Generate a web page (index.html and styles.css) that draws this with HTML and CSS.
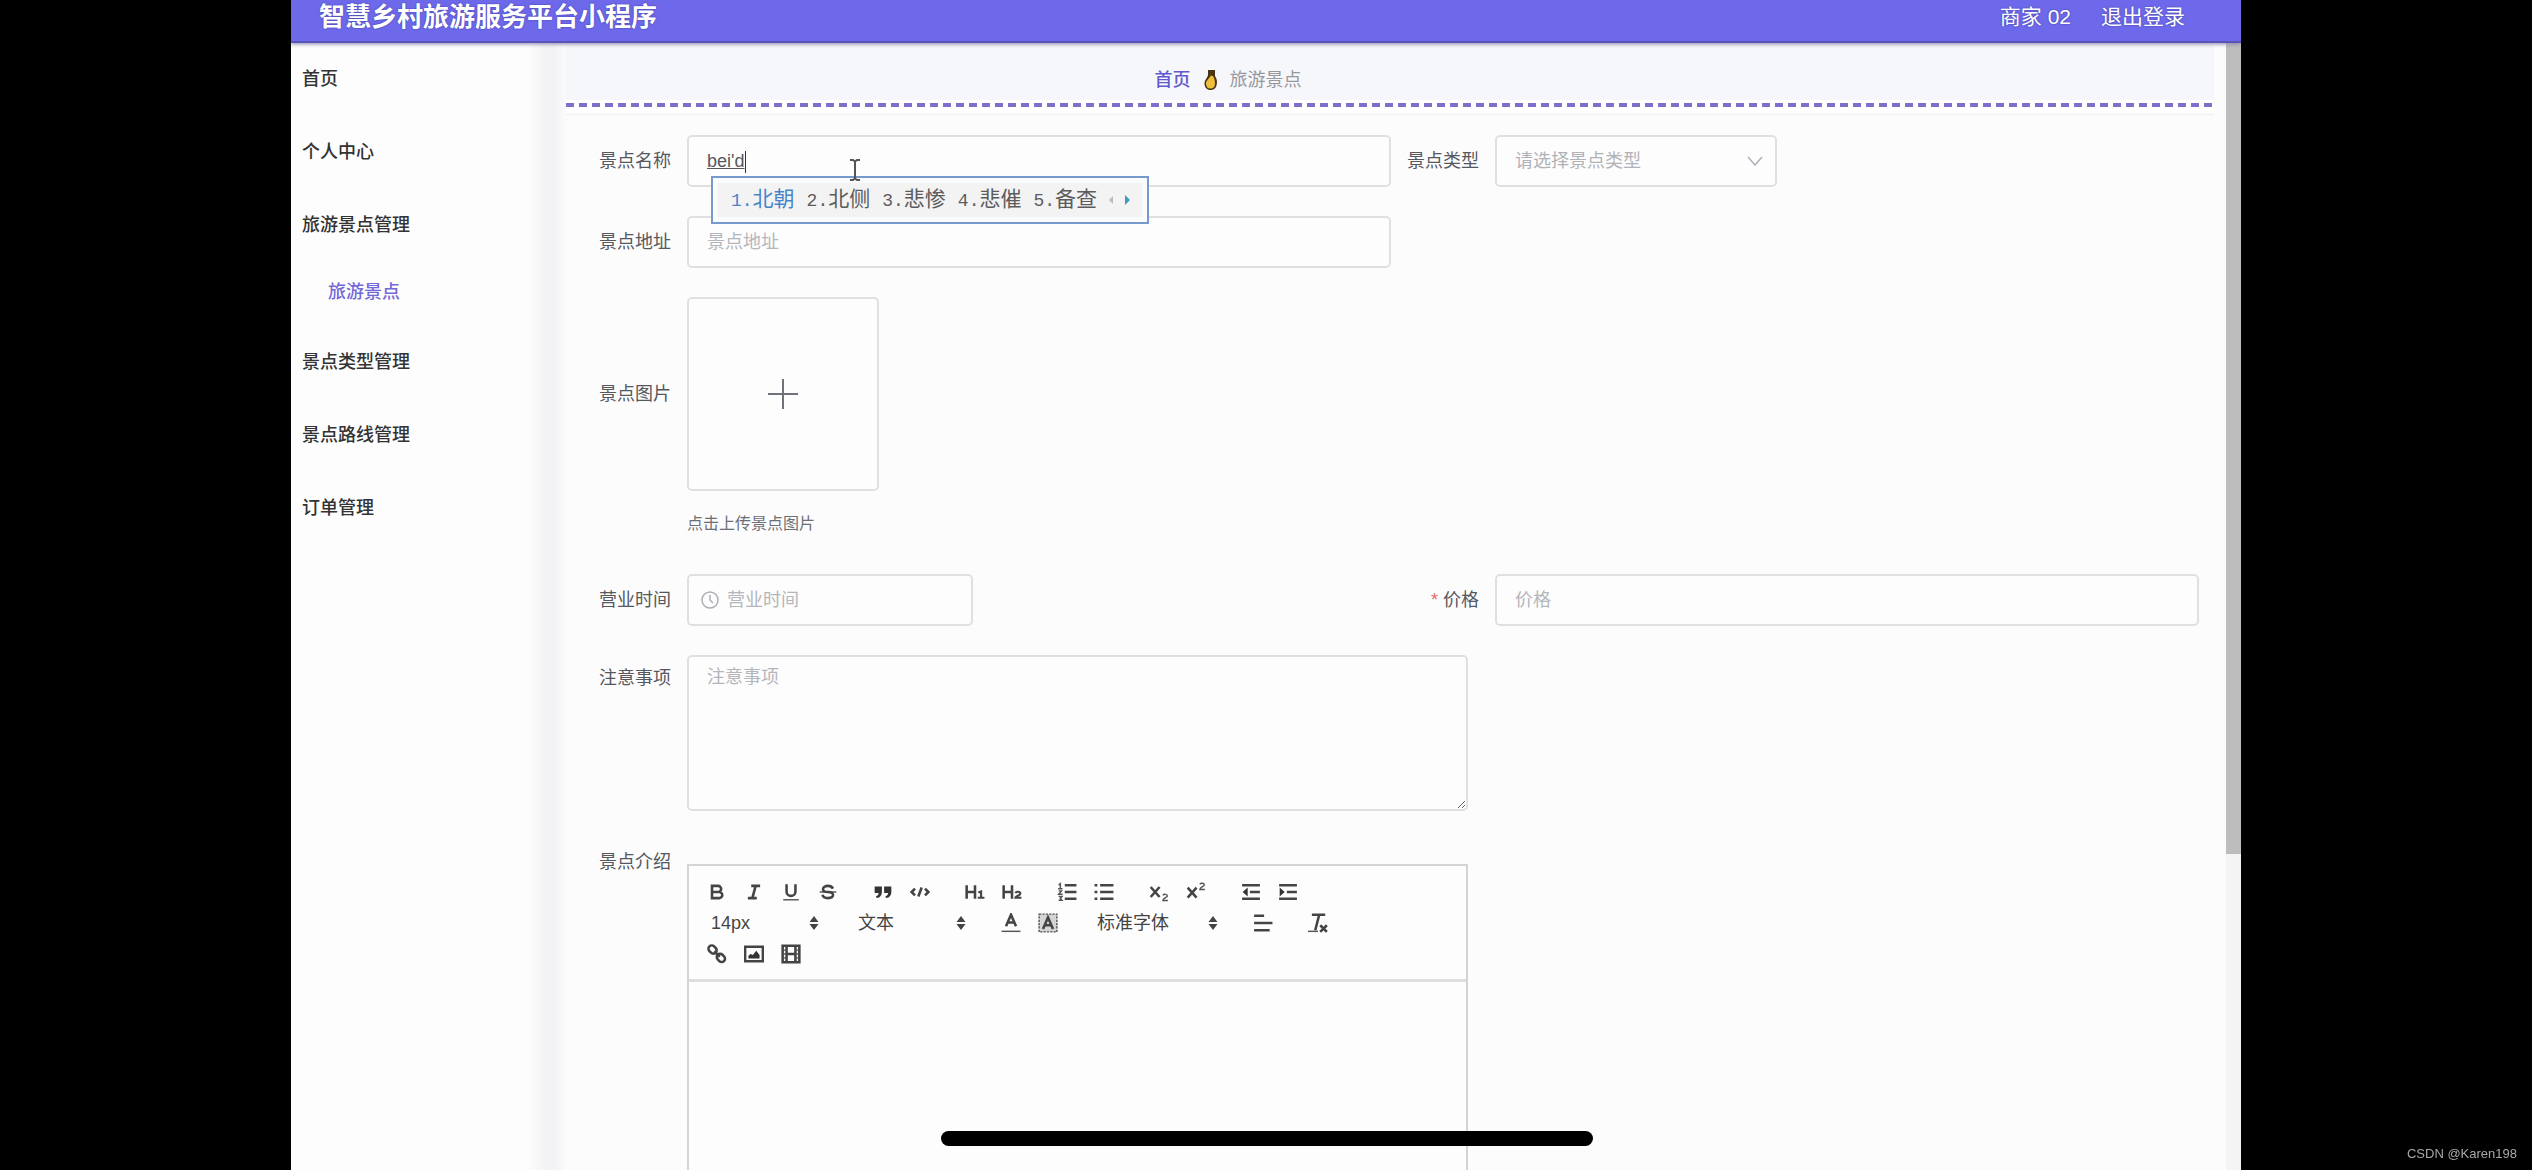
FILE: index.html
```html
<!DOCTYPE html>
<html lang="zh-CN">
<head>
<meta charset="utf-8">
<title>智慧乡村旅游服务平台小程序</title>
<link rel="stylesheet" href="styles.css">
</head>
<body>
<div class="app">
  <header class="topbar">
    <h1 class="brand">智慧乡村旅游服务平台小程序</h1>
    <nav class="account">
      <span>商家 02</span>
      <a href="#">退出登录</a>
    </nav>
  </header>

  <div class="layout">
    <aside class="sidebar">
      <ul class="menu">
        <li><a href="#">首页</a></li>
        <li><a href="#">个人中心</a></li>
        <li><a href="#">旅游景点管理</a>
          <ul class="submenu"><li><a href="#">旅游景点</a></li></ul>
        </li>
        <li><a href="#">景点类型管理</a></li>
        <li><a href="#">景点路线管理</a></li>
        <li><a href="#">订单管理</a></li>
      </ul>
    </aside>

    <main class="content">
      <nav class="crumbs">
        <a href="#">首页</a>
        <svg class="crumb-icon" viewBox="0 0 15 22"><path d="M5 1h7v6c2 3 2.500 6 1.500 9.500C12.500 20 10 21 7.500 21 4 21 1.500 18.500 1.500 14.500 1.500 11 4.500 9 5 6z" fill="#4a3616"/><path d="M8 6.500c3 0 4 4.500 4 8 0 3-1.500 5-4.500 5S3 17.500 3 14.500 5.500 10.500 8 6.500z" fill="#f0bd3c"/></svg>
        <span>旅游景点</span>
      </nav>
      <div class="divider"></div>

      <form class="form">
        <div class="pair">
          <div class="row">
            <label class="label" for="name">景点名称</label>
            <div class="field name-field">
              <input class="input typed" id="name" type="text" value="bei'd">
              <span class="caret"></span>
              <div class="ime">
                <ol class="candidates">
                  <li class="picked"><b>1.</b>北朝</li>
                  <li><b>2.</b>北侧</li>
                  <li><b>3.</b>悲惨</li>
                  <li><b>4.</b>悲催</li>
                  <li><b>5.</b>备查</li>
                </ol>
                <svg class="ime-arrows" viewBox="0 0 26 12"><path d="M6 2v8L2 6z" fill="#b9bcc0"/><path d="M18 1v10l5-5z" fill="#3f9cc8"/></svg>
              </div>
              <svg class="ibeam" viewBox="0 0 12 24"><path d="M1 2h3l2 1.500L8 2h3M6 3v18M1 22h3l2-1.500L8 22h3" fill="none" stroke="#555" stroke-width="2"/></svg>
            </div>
          </div>
          <div class="row">
            <label class="label" for="type">景点类型</label>
            <div class="select-box">
              <select class="input" id="type"><option>请选择景点类型</option></select>
              <svg class="chevron" viewBox="0 0 16 10"><path d="M1 1l7 8 7-8" fill="none" stroke="#aeb2b9" stroke-width="1.500"/></svg>
            </div>
          </div>
        </div>

        <div class="pair">
          <div class="row">
            <label class="label" for="addr">景点地址</label>
            <input class="input field" id="addr" type="text" placeholder="景点地址">
          </div>
        </div>

        <div class="row upload-row">
          <label class="label" for="upload">景点图片</label>
          <button class="upload" id="upload" type="button" aria-label="点击上传景点图片">
            <svg class="plus" viewBox="0 0 30 30"><path d="M15 0v30M0 15h30" stroke="#6f7278" stroke-width="2"/></svg>
          </button>
        </div>
        <p class="hint">点击上传景点图片</p>

        <div class="pair">
          <div class="row">
            <label class="label" for="time">营业时间</label>
            <div class="time-box">
              <svg class="clock" viewBox="0 0 18 18"><circle cx="9" cy="9" r="8"/><path d="M9 4v5l3 3"/></svg>
              <input class="input" id="time" type="text" placeholder="营业时间">
            </div>
          </div>
          <div class="row">
            <label class="label" for="price"><i>*</i>价格</label>
            <input class="input field" id="price" type="text" placeholder="价格">
          </div>
        </div>

        <div class="row top">
          <label class="label" for="notes">注意事项</label>
          <textarea class="input notes" id="notes" placeholder="注意事项"></textarea>
        </div>

        <div class="row top intro">
          <label class="label" for="editor">景点介绍</label>
          <div class="editor">
            <div class="toolbar">
              <div class="tools">
                <div class="group">
                  <button type="button" aria-label="加粗"><svg viewBox="0 0 18 18"><path class="s" d="M4.500 3.500h5.500a2.700 2.700 0 0 1 0 5.500H4.500zM4.500 9h6.500a2.700 2.700 0 0 1 0 5.500H4.500z"/></svg></button>
                  <button type="button" aria-label="斜体"><svg viewBox="0 0 18 18"><path class="s" d="M6.500 3.500h8M3.500 14.500h8M7.500 14.500l3-11"/></svg></button>
                  <button type="button" aria-label="下划线"><svg viewBox="0 0 18 18"><path class="s" d="M5 2v6.500a4 4 0 0 0 8 0V2"/><path class="t" d="M2 16h14"/></svg></button>
                  <button type="button" aria-label="删除线"><svg viewBox="0 0 18 18"><path class="t" d="M1.500 9h15"/><path class="s" d="M13.500 6C12.500 4 11 3.500 9 3.500 6.500 3.500 4.500 4.800 4.500 6.500 4.500 8.500 7 9 9 9s4.500.8 4.500 2.800S11.500 14.500 9 14.500s-4.500-1-5-3"/></svg></button>
                </div>
                <div class="group">
                  <button type="button" aria-label="引用"><svg viewBox="0 0 18 18"><path class="f" d="M1.500 4h6.500V9c0 3-1.500 5-4.500 5.500l-1-1.500C4.500 12.500 5 11.500 5 10H1.500zM10 4h6.500V9c0 3-1.500 5-4.500 5.500l-1-1.500c2-.5 2.500-1.500 2.500-3H10z"/></svg></button>
                  <button type="button" aria-label="代码"><svg viewBox="0 0 18 18"><path class="s" d="M4.500 6l-3 3 3 3M13.500 6l3 3-3 3M10.500 5l-3 8"/></svg></button>
                </div>
                <div class="group">
                  <button type="button" aria-label="一级标题"><svg viewBox="0 0 18 18"><path class="s" d="M1.500 3v12M9 3v12M1.500 9H9"/><path class="s n" d="M12 9.500l2.500-1V14M11.500 14.200h6"/></svg></button>
                  <button type="button" aria-label="二级标题"><svg viewBox="0 0 18 18"><path class="s" d="M1.500 3v12M9 3v12M1.500 9H9"/><path class="s n" d="M12 10c1-2 4.500-1.500 4.500.5 0 1.500-4.500 2.200-4.500 3.700h5.500"/></svg></button>
                </div>
                <div class="group">
                  <button type="button" aria-label="有序列表"><svg viewBox="0 0 18 18"><path class="s" d="M7 3h10.500M7 9h10.500M7 15h10.500"/><path class="t" d="M1.500 2.500L3 1.500v4.500M1 6h4M1.500 8h2.500l-2.500 3h3.500M1.500 13h3l-1.500 1.800 1.500 1.700h-3"/></svg></button>
                  <button type="button" aria-label="无序列表"><svg viewBox="0 0 18 18"><path class="s" d="M5.500 3h12M5.500 9h12M5.500 15h12M.5 3h2.500M.5 9h2.500M.5 15h2.500"/></svg></button>
                </div>
                <div class="group">
                  <button type="button" aria-label="下标"><svg viewBox="0 0 18 18"><path class="s" d="M1.500 4.500l8 9M9.500 4.500l-8 9"/><path class="t" d="M12.500 12c1-1.500 4-1 4 .5s-4 2-4 4.200H17"/></svg></button>
                  <button type="button" aria-label="上标"><svg viewBox="0 0 18 18"><path class="s" d="M1.500 5l8 9M9.500 5l-8 9"/><path class="t" d="M12.500 2c1-1.500 4-1 4 .5s-4 2-4 4.200H17"/></svg></button>
                </div>
                <div class="group">
                  <button type="button" aria-label="减少缩进"><svg viewBox="0 0 18 18"><path class="s" d="M1 3h16M8 9h9M1 15h16"/><path class="f" d="M6 5v8L1.500 9z"/></svg></button>
                  <button type="button" aria-label="增加缩进"><svg viewBox="0 0 18 18"><path class="s" d="M1 3h16M8 9h9M1 15h16"/><path class="f" d="M1.500 5v8L6 9z"/></svg></button>
                </div>
              </div>
              <div class="tools">
                <div class="picker">
                  <select aria-label="字号"><option>14px</option></select>
                  <svg class="updown" viewBox="0 0 10 14"><path d="M5 0l4.500 6H.5zM5 14l4.500-6H.5z"/></svg>
                </div>
                <div class="picker">
                  <select aria-label="段落"><option>文本</option></select>
                  <svg class="updown" viewBox="0 0 10 14"><path d="M5 0l4.500 6H.5zM5 14l4.500-6H.5z"/></svg>
                </div>
                <div class="group">
                  <button type="button" aria-label="文字颜色"><svg viewBox="0 0 18 18"><path class="s" d="M4.500 12L9 1.500 13.500 12M6 8.500h6"/><path class="t" d="M.5 16.500h17"/></svg></button>
                  <button type="button" aria-label="背景颜色"><svg viewBox="0 0 18 18"><path d="M1 1h16v16H1z" fill="#d5d5d8"/><path class="t d" d="M1 1h16v16H1z"/><path class="s" d="M4.500 14.500L9 4l4.500 10.500M6 11h6"/></svg></button>
                </div>
                <div class="picker wide">
                  <select aria-label="字体"><option>标准字体</option></select>
                  <svg class="updown" viewBox="0 0 10 14"><path d="M5 0l4.500 6H.5zM5 14l4.500-6H.5z"/></svg>
                </div>
                <div class="group">
                  <button type="button" aria-label="对齐"><svg viewBox="0 0 18 18"><path class="s" d="M1 2.500h9M1 9h16.500M1 15.500h14"/></svg></button>
                </div>
                <div class="group">
                  <button type="button" aria-label="清除格式"><svg viewBox="0 0 18 18"><path class="s" d="M3.500 1.500h12M10 2L6.500 15.500"/><path class="t" d="M0 16.500h9"/><path class="s" d="M11 11l6 6M17 11l-6 6"/></svg></button>
                </div>
              </div>
              <div class="tools">
                <div class="group">
                  <button type="button" aria-label="链接"><svg viewBox="0 0 18 18"><rect class="s" x="-4" y="-3" width="8" height="6" rx="3" transform="translate(5 5) rotate(45)"/><rect class="s" x="-4" y="-3" width="8" height="6" rx="3" transform="translate(12.500 12.500) rotate(45)"/><path class="s" d="M6.500 6.500l5 5"/></svg></button>
                  <button type="button" aria-label="图片"><svg viewBox="0 0 18 18"><path class="s" d="M1 2.500h16v13H1z"/><path class="f" d="M4 13V10.500l2-1.500 2 1 3-4 3 4V13z"/></svg></button>
                  <button type="button" aria-label="视频"><svg viewBox="0 0 18 18"><path class="s" d="M1.500 1.500h15v15h-15zM5 1.500v15M13 1.500v15M5 9h8"/><path class="t" d="M2 5.500h3M2 9h3M2 12.500h3M13 5.500h3M13 9h3M13 12.500h3"/></svg></button>
                </div>
              </div>
            </div>
            <textarea class="editor-body" id="editor"></textarea>
          </div>
        </div>
      </form>
    </main>

    <div class="scrollbar"><div class="thumb"></div></div>
  </div>
</div>
<div class="home-indicator"></div>
<div class="watermark">CSDN @Karen198</div>
</body>
</html>
```
FILE: styles.css
```css
* { box-sizing: border-box; }

body {
  margin: 0;
  padding: 0 291px;
  background: #000;
  color: #55585e;
  font: 18px/24px "Liberation Sans", "Noto Sans CJK SC", sans-serif;
}

a { color: inherit; text-decoration: none; }
ul, ol { margin: 0; padding: 0; list-style: none; }

input, select, textarea, button { font: inherit; color: inherit; outline: 0; }

.app {
  display: flex;
  flex-direction: column;
  height: 100vh;
  overflow: hidden;
  background: #fcfcfd;
}

/* Top bar */
.topbar {
  display: flex;
  justify-content: space-between;
  flex: none;
  height: 43px;
  padding: 0 56px 0 28px;
  background: #6d69ea;
  color: #fff;
  line-height: 34px;
  border-bottom: 2px solid #5a54b8;
  box-shadow: 0 1px 4px #8885a8;
  z-index: 1;
}
.brand {
  margin: 0;
  font-size: 26px;
  line-height: 34px;
  text-shadow: 0 0 2px #3f3b9e;
}
.account { display: flex; gap: 30px; font-size: 21px; text-shadow: 0 0 2px #3f3b9e; }

/* Page frame */
.layout { display: flex; flex: 1; min-height: 0; }
.sidebar {
  flex: none;
  width: 275px;
  background: linear-gradient(to right, #fdfdfd 236px, #f3f3f6 254px, #f3f3f6 264px, #fbfbfd);
}
.menu { padding: 12px 11px; color: #333; font-weight: 500; }
.menu > li > a { display: block; margin-bottom: 25px; line-height: 48px; }
.submenu { margin: 1px 0 28px; padding-left: 26px; color: #7468d8; }
.submenu a { display: block; line-height: 36px; }
.content { flex: 1; min-width: 0; padding-right: 12px; }
.scrollbar { flex: none; width: 15px; background: #f4f4f4; }
.thumb { height: 72%; background: #bdbdbd; }

/* Breadcrumb */
.crumbs {
  display: flex;
  justify-content: center;
  align-items: center;
  gap: 12px;
  height: 57px;
  padding: 16px 324px 0 0;
  background: #f6f7fa;
  color: #96989e;
}
.crumbs a { color: #6259cf; font-weight: 500; }
.crumb-icon { width: 15px; height: 22px; }
.divider {
  height: 16px;
  background: repeating-linear-gradient(to right, #7c70cc 0 8px, #fff 8px 13px) 0 3px / 100% 4px no-repeat #fff;
  border-bottom: 3px solid #f6f6f7;
}

/* Form */
.form { padding: 19px 15px 0 32px; }
.pair { display: grid; grid-template-columns: 1fr 1fr; gap: 15px; margin-bottom: 29px; }
.row { display: flex; align-items: center; }
.row.top { align-items: flex-start; }
.label { flex: none; width: 89px; padding-right: 16px; line-height: 46px; text-align: right; white-space: nowrap; }
.label i { margin-right: 5px; color: #e06a72; font-style: normal; }
.field { flex: 1; min-width: 0; }
.input {
  width: 100%;
  height: 52px;
  padding: 0 18px;
  border: 2px solid #e0e0e3;
  border-radius: 5px;
  background: #fdfdfd;
}
.input::placeholder { color: #b4b6bb; opacity: 1; }

.name-field { position: relative; }
.typed { text-decoration: underline; }
.caret { position: absolute; left: 58px; top: 16px; width: 1px; height: 22px; background: #333; }
.ime {
  position: absolute;
  left: 24px;
  top: 41px;
  z-index: 2;
  display: flex;
  align-items: center;
  justify-content: space-between;
  width: 438px;
  height: 48px;
  padding: 0 14px 0 18px;
  border: 2px solid #7799cb;
  background: #f3f3f3;
  box-shadow: inset 0 0 0 5px #fafbfc;
  color: #5c5c5c;
  font-size: 21px;
}
.candidates { display: flex; gap: 12px; }
.candidates b { font-family: "Liberation Mono", monospace; font-size: 18px; font-weight: 400; }
.picked { color: #4785ca; }
.ime-arrows { width: 26px; height: 12px; }
.ibeam { position: absolute; left: 162px; top: 23px; z-index: 3; width: 12px; height: 24px; }

.select-box { display: grid; align-items: center; width: 282px; }
.select-box > * { grid-area: 1 / 1; }
.select-box .input { appearance: none; color: #b0b2b7; }
.chevron { justify-self: end; width: 16px; height: 10px; margin-right: 14px; pointer-events: none; }

.upload {
  display: grid;
  place-items: center;
  width: 192px;
  height: 194px;
  border: 2px solid #e0e0e3;
  border-radius: 5px;
  background: #fdfdfd;
}
.plus { width: 30px; height: 30px; }
.hint { margin: 21px 0 38px 89px; color: #6c6f75; font-size: 16px; }

.time-box { display: grid; align-items: center; width: 286px; }
.time-box > * { grid-area: 1 / 1; }
.time-box .input { padding-left: 38px; }
.clock { z-index: 1; width: 18px; height: 18px; margin-left: 14px; fill: none; stroke: #abaeb4; stroke-width: 1.5; }

.notes { width: 781px; height: 156px; padding: 8px 18px; resize: both; }

/* Rich text editor */
.intro { margin-top: 28px; }
.editor { width: 781px; margin-top: 25px; border: 2px solid #d4d4d7; background: #fdfdfd; }
.toolbar { padding: 10px; border-bottom: 3px solid #dededf; color: #444; }
.tools { display: flex; gap: 19px; height: 31px; }
.group { display: flex; gap: 1px; }
.group button { display: grid; place-items: center; width: 36px; padding: 0; border: 0; background: none; }
.group svg { width: 20px; height: 20px; }
.group .s { fill: none; stroke: #444; stroke-width: 2.3; }
.group .n { stroke-width: 1.9; }
.group .t { fill: none; stroke: #555; stroke-width: 1.3; }
.group .d { stroke-dasharray: 2 1; }
.group .f { fill: #333; }
.picker { display: grid; align-items: center; width: 128px; }
.picker.wide { width: 141px; }
.picker > * { grid-area: 1 / 1; }
.picker select { appearance: none; width: 100%; padding: 0 12px; border: 0; background: none; }
.updown { justify-self: end; width: 10px; height: 14px; margin-right: 8px; fill: #444; pointer-events: none; }
.editor-body { display: block; width: 100%; height: 400px; padding: 16px; border: 0; background: none; resize: none; }

/* Device overlay */
.home-indicator {
  position: fixed;
  left: 50%;
  bottom: 24px;
  width: 652px;
  height: 15px;
  margin-left: -325px;
  border-radius: 8px;
  background: #000;
}
.watermark { position: fixed; right: 15px; bottom: 4px; color: #a8a8a8; font-size: 13px; }
```
